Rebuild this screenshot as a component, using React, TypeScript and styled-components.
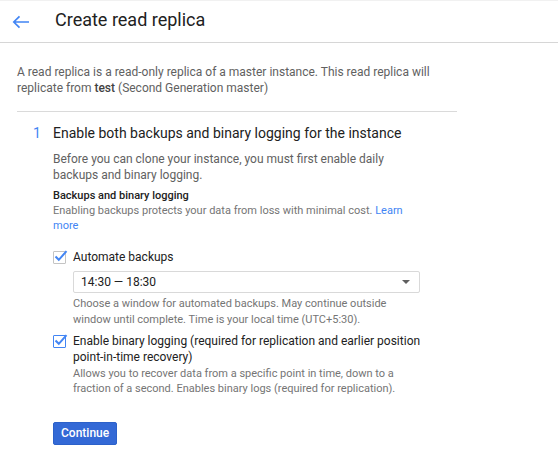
import React from "react";
import styled, { createGlobalStyle } from "styled-components";

const Global = createGlobalStyle`
  html, body { margin: 0; padding: 0; background: #fff; }
  body { font-family: Roboto, "Noto Sans", Arial, sans-serif; -webkit-font-smoothing: antialiased; }
`;

const Page = styled.div`
  width: 558px;
  height: 453px;
  overflow: hidden;
  background: #fff;
  box-shadow: inset 0 1px 0 #f1f1f1;
`;

const Header = styled.header`
  height: 42px;
  border-bottom: 1px solid #d6d6d6;
  display: flex;
  align-items: center;
  padding-left: 12px;
  box-sizing: content-box;
`;

const BackButton = styled.button`
  border: 0;
  background: none;
  padding: 0;
  width: 18px;
  height: 18px;
  display: flex;
  align-items: center;
  justify-content: center;
  color: #4285f4;
  margin-top: 1px;
`;

const Title = styled.h1`
  margin: -2px 0 0 25px;
  font-size: 18px;
  font-weight: 400;
  color: #212121;
  line-height: 24px;
`;

const Main = styled.main`
  padding: 21px 17px 0;
`;

const Intro = styled.p`
  margin: 0;
  font-size: 12px;
  line-height: 16px;
  color: #616161;
  b { font-weight: 500; color: #424242; }
`;

const Divider = styled.hr`
  width: 440px;
  margin: 15px 0 0;
  border: 0;
  border-top: 1px solid #dadada;
`;

const Step = styled.section`
  display: grid;
  grid-template-columns: 20px 1fr;
  padding-left: 16px;
  margin-top: 11px;
`;

const StepNum = styled.div`
  font-size: 14px;
  line-height: 20px;
  color: #4285f4;
`;

const StepBody = styled.div`
  display: flex;
  flex-direction: column;
`;

const StepTitle = styled.h2`
  margin: 0;
  font-size: 14px;
  font-weight: 400;
  line-height: 20px;
  color: #212121;
`;

const Desc = styled.p<{ $mt?: number }>`
  margin: ${(p) => p.$mt ?? 0}px 0 0;
  font-size: 12px;
  line-height: 16px;
  color: #616161;
`;

const SubHead = styled.div`
  margin-top: 5px;
  font-size: 11px;
  font-weight: 500;
  line-height: 15px;
  color: #212121;
`;

const Small = styled.p<{ $mt?: number; $lh?: number }>`
  margin: ${(p) => p.$mt ?? 0}px 0 0;
  font-size: 11px;
  line-height: ${(p) => p.$lh ?? 15}px;
  color: #757575;
  a { color: #4285f4; text-decoration: none; }
`;

const CheckRow = styled.label<{ $mt: number }>`
  display: flex;
  align-items: flex-start;
  margin-top: ${(p) => p.$mt}px;
  font-size: 12px;
  line-height: 16px;
  color: #212121;
`;

const Box = styled.span<{ $focus?: boolean }>`
  flex: none;
  width: 11px;
  height: 11px;
  border: 1px solid ${(p) => (p.$focus ? "#4285f4" : "#c4c4c4")};
  border-radius: 1px;
  margin: 2px 7px 0 0;
  position: relative;
  svg { position: absolute; left: 0px; top: -2px; }
`;

const Indent = styled.div`
  padding-left: 20px;
`;

const Select = styled.div`
  margin-top: 6px;
  width: 347px;
  height: 22px;
  box-sizing: border-box;
  border: 1px solid #d9d9d9;
  border-radius: 2px;
  display: flex;
  align-items: center;
  justify-content: space-between;
  padding: 0 9px 0 7px;
  font-size: 12px;
  color: #212121;
`;

const Caret = styled.span`
  width: 0;
  height: 0;
  border-left: 4px solid transparent;
  border-right: 4px solid transparent;
  border-top: 4px solid #5f5f5f;
`;

const Button = styled.button`
  margin-top: 26px;
  align-self: flex-start;
  height: 23px;
  padding: 0 7px;
  border: 1px solid #2c61c9;
  border-radius: 2px;
  background: #3369d6;
  color: #fff;
  font-family: inherit;
  font-size: 12px;
  font-weight: 500;
  line-height: 21px;
`;

const Check = () => (
  <svg width="14" height="13" viewBox="0 0 14 13">
    <path d="M1.5 6.5 L4.8 9.8 L12.5 1.2" fill="none" stroke="#4285f4" strokeWidth="2" />
  </svg>
);

const BackArrow = () => (
  <svg width="18" height="14" viewBox="0 0 18 14">
    <path d="M17 7 H2 M7.5 1.3 L1.8 7 L7.5 12.7" fill="none" stroke="currentColor" strokeWidth="1.7" />
  </svg>
);

export default function App() {
  return (
    <Page>
      <Global />
      <Header>
        <BackButton aria-label="Back">
          <BackArrow />
        </BackButton>
        <Title>Create read replica</Title>
      </Header>
      <Main>
        <Intro>
          A read replica is a read-only replica of a master instance. This read replica will
          <br />
          replicate from <b>test</b> (Second Generation master)
        </Intro>
        <Divider />
        <Step>
          <StepNum>1</StepNum>
          <StepBody>
            <StepTitle>Enable both backups and binary logging for the instance</StepTitle>
            <Desc $mt={8}>
              Before you can clone your instance, you must first enable daily
              <br />
              backups and binary logging.
            </Desc>
            <SubHead>Backups and binary logging</SubHead>
            <Small>
              Enabling backups protects your data from loss with minimal cost. <a href="#">Learn</a>
              <br />
              <a href="#">more</a>
            </Small>
            <CheckRow $mt={16}>
              <Box>
                <Check />
              </Box>
              Automate backups
            </CheckRow>
            <Indent>
              <Select>
                <span>14:30 — 18:30</span>
                <Caret />
              </Select>
              <Small $mt={3} $lh={16}>
                Choose a window for automated backups. May continue outside
                <br />
                window until complete. Time is your local time (UTC+5:30).
              </Small>
            </Indent>
            <CheckRow $mt={5}>
              <Box $focus>
                <Check />
              </Box>
              <span>
                Enable binary logging (required for replication and earlier position
                <br />
                point-in-time recovery)
              </span>
            </CheckRow>
            <Indent>
              <Small $mt={1}>
                Allows you to recover data from a specific point in time, down to a
                <br />
                fraction of a second. Enables binary logs (required for replication).
              </Small>
            </Indent>
            <Button>Continue</Button>
          </StepBody>
        </Step>
      </Main>
    </Page>
  );
}
